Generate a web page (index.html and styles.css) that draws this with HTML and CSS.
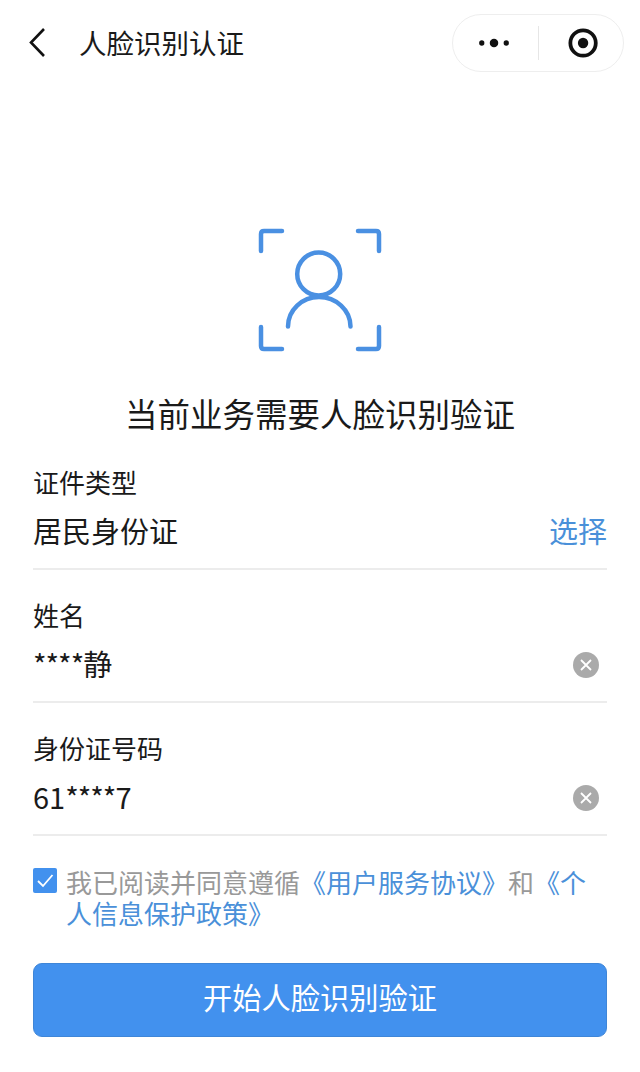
FILE: index.html
```html
<html>
  <head>
    <meta charset="utf-8" />
    <title>人脸识别认证</title>
    <link rel="stylesheet" href="styles.css">
  </head>
  <body>
    <div class="nav">
      <svg class="back" width="20" height="32" viewBox="0 0 20 32">
        <path d="M16 2 L3 15.500 L16 29" fill="none" stroke="#111" stroke-width="2.600" />
      </svg>
      <div class="nav-title">人脸识别认证</div>
      <div class="capsule">
        <svg width="36" height="12" viewBox="0 0 36 12">
          <circle cx="4" cy="6" r="2.800" fill="#111" />
          <circle cx="17" cy="6" r="4.500" fill="#111" />
          <circle cx="30" cy="6" r="2.800" fill="#111" />
        </svg>
        <div class="capsule-line"></div>
        <svg width="32" height="32" viewBox="0 0 32 32">
          <circle cx="16" cy="16" r="13.500" fill="none" stroke="#111" stroke-width="4" />
          <circle cx="16" cy="16" r="5.500" fill="#111" />
        </svg>
      </div>
    </div>

    <div class="hero">
      <svg width="124" height="124" viewBox="0 0 124 124" fill="none" stroke="#4a90e2" stroke-width="4.500" stroke-linecap="round" stroke-linejoin="round">
        <path d="M3 23 V6 Q3 3 6 3 H24" />
        <path d="M100 3 H118 Q121 3 121 6 V23" />
        <path d="M3 99 V118 Q3 121 6 121 H24" />
        <path d="M100 121 H118 Q121 121 121 118 V99" />
        <circle cx="60.700" cy="46" r="21.500" />
        <path d="M30 98.500 C30 82 44 69 61 69 C78 69 92.500 82 92.500 98.500" />
      </svg>
      <h1 class="hero-title">当前业务需要人脸识别验证</h1>
    </div>

    <div class="form">
      <div class="field">
        <div class="field-label">证件类型</div>
        <div class="field-row">
          <span>居民身份证</span>
          <span class="link">选择</span>
        </div>
      </div>
      <div class="field">
        <div class="field-label">姓名</div>
        <div class="field-row">
          <span><span class="mask">****</span>静</span>
          <span class="clear">
            <svg width="26" height="26" viewBox="0 0 26 26">
              <circle cx="13" cy="13" r="13" fill="#aaa" />
              <path d="M8 8 L18 18 M18 8 L8 18" stroke="#fff" stroke-width="1.800" />
            </svg>
          </span>
        </div>
      </div>
      <div class="field">
        <div class="field-label">身份证号码</div>
        <div class="field-row">
          <span>61<span class="mask">****</span>7</span>
          <span class="clear">
            <svg width="26" height="26" viewBox="0 0 26 26">
              <circle cx="13" cy="13" r="13" fill="#aaa" />
              <path d="M8 8 L18 18 M18 8 L8 18" stroke="#fff" stroke-width="1.800" />
            </svg>
          </span>
        </div>
      </div>
    </div>

    <div class="agree">
      <svg class="check" width="24" height="25" viewBox="0 0 24 25">
        <rect width="24" height="25" rx="2" fill="#4291ee" />
        <path d="M5 13 L10 18 L19.500 7" fill="none" stroke="#fff" stroke-width="1.800" />
      </svg>
      <p class="agree-text">我已阅读并同意遵循<span class="link">《用户服务协议》</span>和<span class="link">《个人信息保护政策》</span></p>
    </div>

    <div class="start-btn">开始人脸识别验证</div>
  </body>
</html>
```

FILE: styles.css
```css
body {
  margin: 0;
  background-color: white;
  color: #1a1a1a;
  font-family: "Noto Sans CJK SC", "Liberation Sans", sans-serif;
}
.nav {
  display: flex;
  align-items: center;
  height: 86px;
  padding: 0 16px 0 28px;
}
.back {
  margin-right: 31px;
}
.nav-title {
  flex: 1;
  margin-bottom: 3px;
  font-size: 27.500px;
  line-height: 36px;
}
.capsule {
  display: flex;
  align-items: center;
  box-sizing: border-box;
  width: 172px;
  height: 58px;
  padding: 0 25px;
  border: 1px solid #eee;
  border-radius: 29px;
}
.capsule-line {
  width: 1px;
  height: 34px;
  margin: 0 29px 0 26px;
  background-color: #e6e6e6;
}
.hero {
  display: flex;
  flex-direction: column;
  align-items: center;
  padding-top: 142px;
}
.hero-title {
  margin: 39px 0 0;
  font-size: 32.500px;
  font-weight: normal;
  line-height: 44px;
}
.form {
  padding: 27px 33px 0 33px;
}
.field {
  margin-bottom: 25px;
  padding-bottom: 10px;
  border-bottom: 2px solid #ececec;
}
.field-label {
  font-size: 26px;
  line-height: 40px;
}
.field-row {
  display: flex;
  justify-content: space-between;
  align-items: center;
  height: 56px;
  font-size: 29px;
}
.mask {
  letter-spacing: -1px;
}
.link {
  color: #4a90d9;
}
.clear {
  display: flex;
  margin: 4px 8px 0 0;
}
.agree {
  display: flex;
  padding: 6px 33px 0 33px;
}
.check {
  flex: none;
  margin-top: 1px;
  margin-right: 9px;
}
.agree-text {
  margin: -1px 0 0 0;
  color: #999;
  font-size: 26px;
  line-height: 31px;
}
.start-btn {
  box-sizing: border-box;
  margin: 35px 33px 0 33px;
  height: 74px;
  background-color: #4291ee;
  border: 1px solid #3f86d8;
  border-radius: 9px;
  color: white;
  font-size: 29.250px;
  line-height: 65px;
  text-align: center;
}
```
